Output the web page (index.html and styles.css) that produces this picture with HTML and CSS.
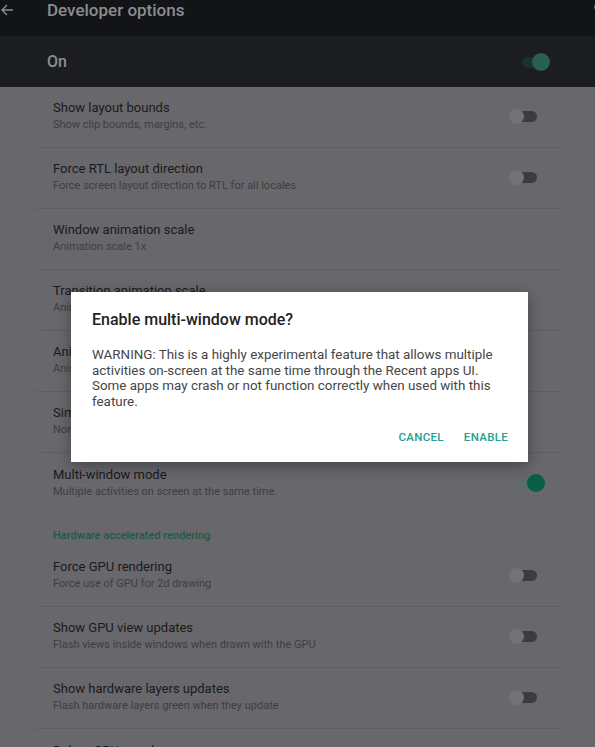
FILE: index.html
```html
<!DOCTYPE html>
<html>
<head>
<meta charset="utf-8">
<link rel="stylesheet" href="styles.css">
</head>
<body>
<header class="appbar">
  <svg class="back" viewBox="0 0 14 14" width="14" height="14"><path d="M13 7H2M7 2L2 7l5 5" fill="none" stroke="#8b8d90" stroke-width="1.4"/></svg>
  <span class="appbar-title">Developer options</span>
  <svg class="more" viewBox="0 0 14 14" width="14" height="14"><circle cx="6" cy="6" r="4" fill="none" stroke="#9a9c9f" stroke-width="1.4"/></svg>
</header>
<div class="onbar">
  <span class="on-label">On</span>
  <span class="switch switch-on-dark"><span class="track"></span><span class="thumb"></span></span>
</div>
<main class="list">
  <div class="row divided">
    <div class="text"><div class="title">Show layout bounds</div><div class="sub">Show clip bounds, margins, etc.</div></div>
    <span class="switch switch-off"><span class="track"></span><span class="thumb"></span></span>
  </div>
  <div class="row divided">
    <div class="text"><div class="title">Force RTL layout direction</div><div class="sub">Force screen layout direction to RTL for all locales</div></div>
    <span class="switch switch-off"><span class="track"></span><span class="thumb"></span></span>
  </div>
  <div class="row divided">
    <div class="text"><div class="title">Window animation scale</div><div class="sub">Animation scale 1x</div></div>
  </div>
  <div class="row divided">
    <div class="text"><div class="title">Transition animation scale</div><div class="sub">Animation scale 1x</div></div>
  </div>
  <div class="row divided">
    <div class="text"><div class="title">Animator duration scale</div><div class="sub">Animator duration scale 1x</div></div>
  </div>
  <div class="row divided">
    <div class="text"><div class="title">Simulate secondary displays</div><div class="sub">None</div></div>
  </div>
  <div class="row">
    <div class="text"><div class="title">Multi-window mode</div><div class="sub">Multiple activities on screen at the same time.</div></div>
    <span class="switch switch-on"><span class="track"></span><span class="thumb"></span></span>
  </div>
  <div class="section">Hardware accelerated rendering</div>
  <div class="row divided">
    <div class="text"><div class="title">Force GPU rendering</div><div class="sub">Force use of GPU for 2d drawing</div></div>
    <span class="switch switch-off"><span class="track"></span><span class="thumb"></span></span>
  </div>
  <div class="row divided">
    <div class="text"><div class="title">Show GPU view updates</div><div class="sub">Flash views inside windows when drawn with the GPU</div></div>
    <span class="switch switch-off"><span class="track"></span><span class="thumb"></span></span>
  </div>
  <div class="row divided">
    <div class="text"><div class="title">Show hardware layers updates</div><div class="sub">Flash hardware layers green when they update</div></div>
    <span class="switch switch-off"><span class="track"></span><span class="thumb"></span></span>
  </div>
  <div class="row">
    <div class="text"><div class="title">Debug GPU overdraw</div><div class="sub">Off</div></div>
  </div>
</main>

<div class="dialog" role="dialog">
  <h2 class="dialog-title">Enable multi-window mode?</h2>
  <p class="dialog-body">WARNING: This is a highly experimental feature that allows multiple activities on-screen at the same time through the Recent apps UI. Some apps may crash or not function correctly when used with this feature.</p>
  <div class="dialog-actions">
    <span class="btn">CANCEL</span>
    <span class="btn">ENABLE</span>
  </div>
</div>
</body>
</html>
```

FILE: styles.css
```css
* { box-sizing: border-box; }
html, body { margin: 0; padding: 0; }
body {
  width: 595px;
  height: 747px;
  overflow: hidden;
  background: #68676c;
  font-family: Roboto, "Noto Sans", sans-serif;
  position: relative;
}
.appbar {
  height: 36px;
  background: #121417;
  display: flex;
  align-items: flex-start;
  padding-top: 1px;
  overflow: hidden;
}
.back { margin-top: 2px; flex: none; }
.appbar-title {
  margin-left: 33px;
  font-size: 17px;
  line-height: 18px;
  font-weight: 500;
  color: #8b8d90;
}
.more {
  margin-left: auto;
  margin-right: -12px;
  flex: none;
}
.onbar {
  height: 51px;
  background: #1b1d20;
  display: flex;
  align-items: center;
  justify-content: space-between;
  padding: 0 45px 0 47px;
}
.on-label {
  font-size: 16px;
  font-weight: 500;
  color: #8b8e91;
}
.list {
  padding: 0 32px 0 36px;
}
.row {
  display: flex;
  align-items: center;
  justify-content: space-between;
  padding: 12px 26px 14px 17px;
  height: 61px;
}
.row.divided { border-bottom: 1px solid #5f5e63; }
.title {
  font-size: 13px;
  line-height: 18px;
  color: #1a1a1c;
}
.sub {
  font-size: 11px;
  line-height: 16px;
  color: #3e3e42;
}
.section {
  padding: 14px 0 2px 17px;
  font-size: 11px;
  line-height: 16px;
  font-weight: 500;
  color: #1d5a45;
}
.switch {
  position: relative;
  width: 28px;
  height: 18px;
  flex: none;
}
.switch .track {
  position: absolute;
  left: 5px;
  right: 0;
  top: 4px;
  height: 11px;
  border-radius: 6px;
}
.switch .thumb {
  position: absolute;
  top: 2px;
  width: 15px;
  height: 15px;
  border-radius: 50%;
}
.switch-off .track { background: #3c3b3f; }
.switch-off .thumb { left: 0; background: #737277; }
.switch-on { margin-right: -8px; }
.switch-on .track { background: #5a6e67; right: 6px; left: 0; }
.switch-on .thumb { left: 10px; top: 0; width: 18px; height: 18px; background: #0b5e46; }
.switch-on-dark .track { background: #1c3129; right: 6px; left: 0; }
.switch-on-dark .thumb { left: 10px; top: 0; width: 18px; height: 18px; background: #2a5f52; }

.dialog {
  position: absolute;
  left: 71px;
  top: 292px;
  width: 457px;
  height: 170px;
  background: #fff;
  box-shadow: 0 4px 14px rgba(0,0,0,0.35);
  padding: 16px 20px 0 21px;
  display: flex;
  flex-direction: column;
}
.dialog-title {
  margin: 0;
  font-size: 16px;
  line-height: 24px;
  font-weight: 500;
  color: #222;
}
.dialog-body {
  margin: 15px -4px 0 0;
  font-size: 13.4px;
  line-height: 15.7px;
  color: #464646;
}
.dialog-actions {
  margin-top: auto;
  margin-bottom: 19px;
  display: flex;
  justify-content: flex-end;
  gap: 20px;
}
.btn {
  font-size: 11.5px;
  line-height: 12px;
  font-weight: 500;
  color: #26a08f;
  letter-spacing: 0.3px;
}
```
